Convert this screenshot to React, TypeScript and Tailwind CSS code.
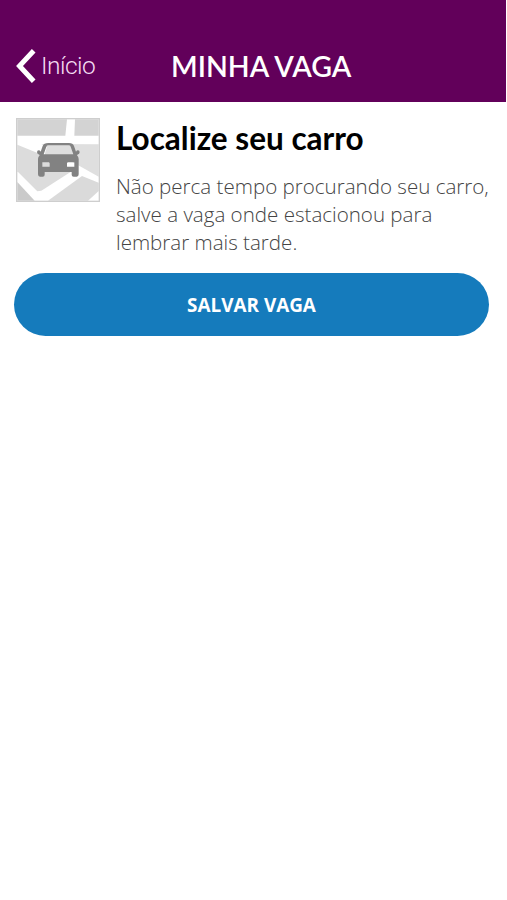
interface HeaderProps {
  title: string;
  backLabel: string;
}

function Header({ title, backLabel }: HeaderProps) {
  return (
    <header className="mr-px flex h-[101.5px] items-end bg-[#62005a] pb-[18px] text-white">
      <button type="button" className="flex h-9 w-[171px] items-center pl-4">
        <svg className="h-[34px] w-5" viewBox="0 0 20 34" fill="none" stroke="currentColor" strokeWidth="5">
          <path d="M17.7 1.8 3.5 17l14.2 15.2" />
        </svg>
        <span className="ml-[5px] font-['Roboto',sans-serif] text-[24.500px] leading-9 font-light tracking-[-0.5px] text-[#f3dcf2]">
          {backLabel}
        </span>
      </button>
      <h1 className="font-['Lato',sans-serif] text-[28.500px] leading-9 font-semibold whitespace-nowrap">{title}</h1>
    </header>
  );
}

function MapThumb() {
  return (
    <svg className="h-[84px] w-[84px] shrink-0" viewBox="24 29 252 252">
      <rect x="24" y="29" width="252" height="252" fill="#fff" />
      <path fill="#d3d3d3" d="M28 33h149l-5 49H28zM201 33h71v49h-73z" />
      <path fill="#dcdcdc" d="M28 109l92 38 77 38-97 62-12 2-60-60z" />
      <path fill="#dfdfdf" d="M100 107l172 1v97l-68-38z" />
      <path fill="#dadada" d="M222 203l50 20v25l-32 29H120z" />
      <path fill="#cacaca" d="M28 221l52 56H28z" />
      <rect x="26" y="31" width="248" height="248" fill="none" stroke="#cecece" strokeWidth="4" />
      <path fill="#dedede" d="M118 112h68l9 29h-86z" />
      <path
        fill="#828282"
        fillRule="evenodd"
        d="M121 104h62q12 0 15 9l6 17q2-4 6-4 5 0 5 6t-7 7l-1 2q5 5 5 11v46q0 7-6 7h-9q-6 0-6-6v-8h-81v8q0 6-6 6h-8q-6 0-6-7v-46q0-6 5-11l-1-2q-7-1-7-7t5-6q4 0 6 4l6-17q3-9 17-9zM121 111q-5 0-6 4l-8 23h89l-8-23q-1-4-6-4zM103 162h20l2 3v10h-22zM199 162h-20l-2 3v10h22z"
      />
    </svg>
  );
}

export default function App() {
  return (
    <div className="min-h-[900px] w-full bg-white">
      <Header title="MINHA VAGA" backLabel="Início" />
      <main>
        <section className="flex gap-4 pt-4 pl-4">
          <MapThumb />
          <div>
            <h2 className="font-['Lato',sans-serif] text-[31.500px] leading-[41px] font-bold text-black">
              Localize seu carro
            </h2>
            <p className="mt-[13px] font-['Open_Sans',sans-serif] text-[20.550px] leading-7 font-light whitespace-nowrap text-[#444]">
              Não perca tempo procurando seu carro,
              <br />
              salve a vaga onde estacionou para
              <br />
              lembrar mais tarde.
            </p>
          </div>
        </section>
        <button
          type="button"
          className="mt-[17px] ml-3.5 flex h-[63px] w-[475px] items-center justify-center rounded-full bg-[#157bbc] pt-0.5 font-['Open_Sans',sans-serif] text-[18.900px] font-bold text-white"
        >
          SALVAR VAGA
        </button>
      </main>
    </div>
  );
}
